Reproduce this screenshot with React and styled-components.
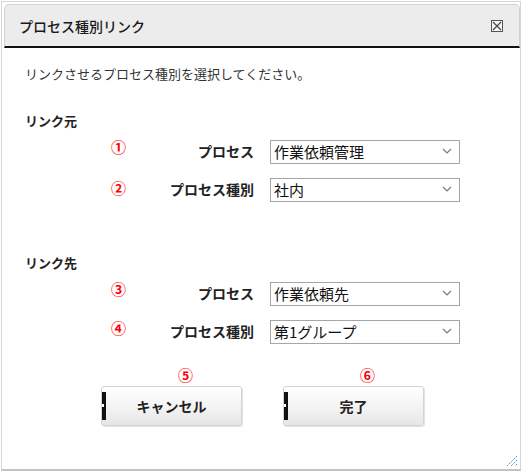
import React, { useState } from "react";
import styled, { createGlobalStyle } from "styled-components";

const GlobalStyle = createGlobalStyle`
  body {
    margin: 0;
    background: #ffffff;
    font-family: "Noto Sans CJK JP", "Noto Sans", sans-serif;
  }
`;

const Dialog = styled.div`
  position: relative;
  box-sizing: border-box;
  margin: 1px 0 0 1px;
  width: 520px;
  height: 470px;
  border: 1px solid #d6d6d6;
  border-bottom: 2px solid #c2c2c2;
  padding: 2px 0 0 2px;
  background: #fff;
  display: flex;
  flex-direction: column;
`;

const Header = styled.div`
  box-sizing: border-box;
  height: 44px;
  display: flex;
  align-items: center;
  justify-content: space-between;
  background: #ececec;
  border: 1px solid #d0d0d0;
  border-bottom: 2px solid #111;
  border-radius: 5px 5px 0 0;
  padding: 0 16px 0 14px;
`;

const Title = styled.h1`
  margin: 0;
  font-size: 14px;
  font-weight: 500;
  color: #1a1a1a;
`;

const CloseBox = styled.button`
  box-sizing: border-box;
  width: 12px;
  height: 12px;
  padding: 0;
  border: 1px solid #555;
  background: #f4f4f4;
  display: flex;
  align-items: center;
  justify-content: center;
  cursor: pointer;
`;

const Body = styled.div`
  padding: 17px 0 0 21px;
  display: flex;
  flex-direction: column;
`;

const Intro = styled.p`
  margin: 0;
  font-size: 13px;
  line-height: 18px;
  color: #333;
`;

const SectionTitle = styled.h2`
  margin: ${(p) => p.$top}px 0 9px;
  font-size: 13px;
  line-height: 18px;
  font-weight: bold;
  color: #222;
`;

const Row = styled.div`
  display: grid;
  grid-template-columns: 14px 113px 190px;
  column-gap: 16px;
  align-items: center;
  margin-left: 86px;
  margin-bottom: 14px;
`;

const Num = styled.span`
  font-size: 15px;
  line-height: 16px;
  font-weight: bold;
  color: #ff0000;
  padding-bottom: ${(p) => p.$lift}px;
`;

const Label = styled.label`
  text-align: right;
  font-size: 14px;
  font-weight: bold;
  color: #222;
`;

const SelectWrap = styled.div`
  position: relative;
  height: 24px;
`;

const Select = styled.select`
  box-sizing: border-box;
  width: 100%;
  height: 24px;
  appearance: none;
  border: 1px solid #a6a6a6;
  border-radius: 0;
  background: #fff;
  padding: 0 0 0 3px;
  font-family: "Noto Sans CJK JP", "Noto Sans", sans-serif;
  font-size: 15px;
  color: #111;
`;

const Chevron = styled.svg`
  position: absolute;
  right: 8px;
  top: 9px;
  pointer-events: none;
`;

const Actions = styled.div`
  display: flex;
  gap: 41px;
  margin: 10px 0 0 76px;
`;

const ActionCol = styled.div`
  display: flex;
  flex-direction: column;
`;

const ActionNum = styled.span`
  text-align: center;
  padding-left: 28px;
  font-size: 15px;
  line-height: 16px;
  font-weight: bold;
  color: #ff0000;
  margin-bottom: 3px;
`;

const Button = styled.button`
  position: relative;
  box-sizing: border-box;
  width: 141px;
  height: 40px;
  border: 1px solid #d4d4d4;
  border-radius: 3px;
  background: linear-gradient(#ffffff, #f3f3f3 55%, #e6e6e6);
  box-shadow: 1px 1px 1px rgba(0, 0, 0, 0.12);
  font-family: "Noto Sans CJK JP", "Noto Sans", sans-serif;
  font-size: 14px;
  font-weight: bold;
  color: #222;
  cursor: pointer;
  &::before {
    content: "";
    position: absolute;
    left: 0;
    top: 5px;
    bottom: 5px;
    width: 4px;
    background: #111;
  }
  &::after {
    content: "";
    position: absolute;
    left: 0;
    top: 17px;
    width: 2px;
    height: 3px;
    background: #fff;
  }
`;

const Grip = styled.svg`
  position: absolute;
  right: 2px;
  bottom: 2px;
`;

function Dropdown({ value, options, onChange }) {
  return (
    <SelectWrap>
      <Select value={value} onChange={(e) => onChange(e.target.value)}>
        {options.map((o) => (
          <option key={o} value={o}>
            {o}
          </option>
        ))}
      </Select>
      <Chevron width="10" height="6" viewBox="0 0 10 6">
        <path d="M1 1 L5 5 L9 1" fill="none" stroke="#7a7a7a" strokeWidth="1.2" />
      </Chevron>
    </SelectWrap>
  );
}

export default function App() {
  const [srcProcess, setSrcProcess] = useState("作業依頼管理");
  const [srcType, setSrcType] = useState("社内");
  const [dstProcess, setDstProcess] = useState("作業依頼先");
  const [dstType, setDstType] = useState("第1グループ");

  return (
    <>
      <GlobalStyle />
      <Dialog>
        <Header>
          <Title>プロセス種別リンク</Title>
          <CloseBox aria-label="閉じる">
            <svg width="10" height="10" viewBox="0 0 10 10">
              <path d="M1 1 L9 9 M9 1 L1 9" stroke="#444" strokeWidth="1.1" />
            </svg>
          </CloseBox>
        </Header>
        <Body>
          <Intro>リンクさせるプロセス種別を選択してください。</Intro>
          <SectionTitle $top={29}>リンク元</SectionTitle>
          <Row>
            <Num $lift={8}>①</Num>
            <Label>プロセス</Label>
            <Dropdown value={srcProcess} options={["作業依頼管理"]} onChange={setSrcProcess} />
          </Row>
          <Row>
            <Num $lift={2}>②</Num>
            <Label>プロセス種別</Label>
            <Dropdown value={srcType} options={["社内", "社外"]} onChange={setSrcType} />
          </Row>
          <SectionTitle $top={39}>リンク先</SectionTitle>
          <Row>
            <Num $lift={8}>③</Num>
            <Label>プロセス</Label>
            <Dropdown value={dstProcess} options={["作業依頼先"]} onChange={setDstProcess} />
          </Row>
          <Row>
            <Num $lift={6}>④</Num>
            <Label>プロセス種別</Label>
            <Dropdown value={dstType} options={["第1グループ", "第2グループ"]} onChange={setDstType} />
          </Row>
          <Actions>
            <ActionCol>
              <ActionNum>⑤</ActionNum>
              <Button>キャンセル</Button>
            </ActionCol>
            <ActionCol>
              <ActionNum>⑥</ActionNum>
              <Button>完了</Button>
            </ActionCol>
          </Actions>
        </Body>
        <Grip width="12" height="12" viewBox="0 0 12 12">
          <path d="M11 1 L1 11 M11 5 L5 11 M11 9 L9 11" stroke="#3d8fe0" strokeWidth="1" strokeDasharray="1.5 1" />
        </Grip>
      </Dialog>
    </>
  );
}
